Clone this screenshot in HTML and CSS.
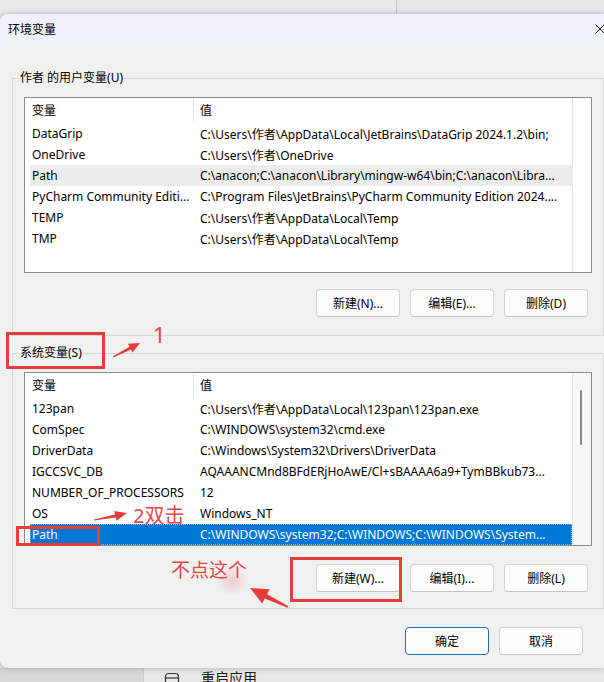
FILE: index.html
```html
<!DOCTYPE html>
<html lang="zh-CN">
<head>
<meta charset="utf-8">
<title>环境变量</title>
<link rel="stylesheet" href="styles.css">
</head>
<body>
<div class="behind-top"><div class="bt-left"></div><div class="bt-right"></div></div>

<div class="dialog">
  <div class="titlebar">
    <span class="title">环境变量</span>
    <svg class="close" width="10" height="10" viewBox="0 0 10 10"><path d="M0.5 0.5L9.5 9.5M9.5 0.5L0.5 9.5" stroke="#1a1a1a" stroke-width="1"/></svg>
  </div>
  <div class="dlg-body">
    <section class="group">
      <div class="group-title">作者 的用户变量(U)</div>
      <div class="list list-user">
        <div class="list-main">
          <div class="list-head"><div class="h-name">变量</div><div class="h-val">值</div></div>
          <div class="row"><div class="c-name">DataGrip</div><div class="c-val">C:\Users\作者\AppData\Local\JetBrains\DataGrip 2024.1.2\bin;</div></div>
          <div class="row"><div class="c-name">OneDrive</div><div class="c-val">C:\Users\作者\OneDrive</div></div>
          <div class="row row-hover"><div class="c-name">Path</div><div class="c-val">C:\anacon;C:\anacon\Library\mingw-w64\bin;C:\anacon\Libra...</div></div>
          <div class="row"><div class="c-name">PyCharm Community Editi...</div><div class="c-val">C:\Program Files\JetBrains\PyCharm Community Edition 2024....</div></div>
          <div class="row"><div class="c-name">TEMP</div><div class="c-val">C:\Users\作者\AppData\Local\Temp</div></div>
          <div class="row"><div class="c-name">TMP</div><div class="c-val">C:\Users\作者\AppData\Local\Temp</div></div>
        </div>
        <div class="list-side"></div>
      </div>
      <div class="btn-row btn-row-user">
        <button class="btn">新建(N)...</button>
        <button class="btn">编辑(E)...</button>
        <button class="btn">删除(D)</button>
      </div>
    </section>

    <section class="group group-sys">
      <div class="group-title">系统变量(S)</div>
      <div class="list list-sys">
        <div class="list-main">
          <div class="list-head"><div class="h-name">变量</div><div class="h-val">值</div></div>
          <div class="row"><div class="c-name">123pan</div><div class="c-val">C:\Users\作者\AppData\Local\123pan\123pan.exe</div></div>
          <div class="row"><div class="c-name">ComSpec</div><div class="c-val">C:\WINDOWS\system32\cmd.exe</div></div>
          <div class="row"><div class="c-name">DriverData</div><div class="c-val">C:\Windows\System32\Drivers\DriverData</div></div>
          <div class="row"><div class="c-name">IGCCSVC_DB</div><div class="c-val">AQAAANCMnd8BFdERjHoAwE/Cl+sBAAAA6a9+TymBBkub73...</div></div>
          <div class="row"><div class="c-name">NUMBER_OF_PROCESSORS</div><div class="c-val">12</div></div>
          <div class="row"><div class="c-name">OS</div><div class="c-val">Windows_NT</div></div>
          <div class="row row-selected"><div class="c-name">Path</div><div class="c-val">C:\WINDOWS\system32;C:\WINDOWS;C:\WINDOWS\System...</div></div>
        </div>
        <div class="list-side scroll-track"><div class="thumb"></div></div>
      </div>
      <div class="btn-row btn-row-sys">
        <button class="btn">新建(W)...</button>
        <button class="btn">编辑(I)...</button>
        <button class="btn">删除(L)</button>
      </div>
    </section>

    <div class="footer">
      <button class="btn btn-default">确定</button>
      <button class="btn">取消</button>
    </div>
  </div>
</div>

<div class="behind-bottom">
  <div class="bb-left"></div>
  <div class="bb-right">
    <svg class="bb-icon" width="16" height="14" viewBox="0 0 16 14"><rect x="1.5" y="1.5" width="13" height="14" rx="3" fill="none" stroke="#333" stroke-width="1.2"/><path d="M1.5 6H14.5" stroke="#333" stroke-width="1.2"/></svg>
    <span class="bb-text">重启应用</span>
  </div>
</div>

<div class="annotations">
  <svg class="anno-svg" width="604" height="682" viewBox="0 0 604 682">
    <g fill="none" stroke="#e63c3c" stroke-width="3">
      <rect x="7.5" y="333.5" width="96" height="34"/>
      <rect x="17.5" y="527.5" width="81" height="17"/>
      <rect x="291.5" y="558.5" width="109" height="42"/>
    </g>
    <g fill="#e63c3c">
      <polygon points="113.3,357.5 130.9,349.5 132.5,352.5 140,343 127.9,343.7 129.5,346.7 112.7,356.5"/>
      <polygon points="94.15,520.6 115.8,517.5 116.6,520.8 127,513 114.2,511.1 115.0,514.4 93.85,519.4"/>
      <polygon points="288.4,606.3 267.1,594.2 269.6,589.3 250,588 262.2,603.5 264.7,598.6 287.6,607.7"/>
    </g>
  </svg>
  <div class="blur"></div>
  <div class="anno-text anno-1">1</div>
  <div class="anno-text anno-2">2双击</div>
  <div class="anno-text anno-3">不点这个</div>
</div>
</body>
</html>
```

FILE: styles.css
```css
* { box-sizing: border-box; }
html, body { margin: 0; padding: 0; }
body {
  width: 604px;
  height: 682px;
  overflow: hidden;
  position: relative;
  background: #e4e4e4;
  font-family: "Noto Sans", "Noto Sans CJK SC", sans-serif;
  font-size: 12px;
  color: #000;
}

.behind-top { height: 14px; display: flex; }
.bt-left { width: 397px; background: #ebebeb; border-right: 1px solid #c9c9c9; }
.bt-right { flex: 1; background: #e7e7e7; }

.dialog {
  position: relative;
  z-index: 1;
  width: 604px;
  height: 654px;
  background: #f0f0f0;
  border-radius: 8px 0 0 8px;
  box-shadow: 0 0 6px rgba(0, 0, 0, 0.28);
  overflow: hidden;
  display: flex;
  flex-direction: column;
}

.titlebar {
  height: 29px;
  flex: none;
  background: #eef2f8;
  display: flex;
  align-items: center;
  padding-left: 8px;
}
.title { flex: 1; }
.close { flex: none; margin-right: -1px; }

.dlg-body { padding: 35px 0 0 12px; }

.group {
  width: 592px;
  border: 1px solid #d9d9d9;
  padding: 0 11px 18px 11px;
}
.group-sys { margin-top: 17px; padding-bottom: 16px; }
.group-title {
  width: fit-content;
  margin: -9px 0 0 -5px;
  padding: 0 1px;
  height: 16px;
  line-height: 16px;
  background: #f0f0f0;
}

.list {
  margin-top: 11px;
  height: 176px;
  background: #fff;
  border: 1px solid #8c8c8c;
  display: flex;
}
.list-sys { height: 174px; }
.list-main { width: 547px; display: flex; flex-direction: column; }
.list-side { flex: 1; border-left: 1px solid #e8e8e8; }
.scroll-track { background: #f7f7f7; border-left-color: #e3e3e3; }
.thumb {
  margin: 17px 0 0 7px;
  width: 2px;
  height: 55px;
  border-radius: 1px;
  background: #8a8a8a;
}

.list-head { height: 25px; display: flex; flex: none; }
.h-name { width: 169px; padding-left: 7px; line-height: 25px; border-right: 1px solid #e5e5e5; }
.h-val { flex: 1; padding-left: 6px; line-height: 25px; }

.row {
  height: 21px;
  flex: none;
  margin-left: 5px;
  display: flex;
  align-items: center;
  white-space: nowrap;
}
.c-name { width: 164px; padding-left: 2px; overflow: hidden; }
.c-val { flex: 1; padding-left: 6px; overflow: hidden; }
.row-hover { background: #ececec; }
.row-selected { background: #0078d7; color: #fff; outline: 1px dotted #7fb7e8; outline-offset: -1px; }

.btn {
  width: 84px;
  height: 28px;
  padding: 0;
  font: inherit;
  color: #000;
  background: #fdfdfd;
  border: 1px solid #d4d4d4;
  border-bottom-color: #c4c4c4;
  border-radius: 4px;
}
.btn-default { border: 1px solid #1f6fb5; }

.btn-row { display: flex; justify-content: flex-end; gap: 10px; padding-right: 4px; }
.btn-row-user { margin-top: 16px; }
.btn-row-sys { margin-top: 18px; }

.footer {
  width: 592px;
  margin-top: 18px;
  padding-right: 21px;
  display: flex;
  justify-content: flex-end;
  gap: 10px;
}

.behind-bottom { height: 14px; display: flex; overflow: hidden; }
.bb-left { width: 144px; background: #d8d8d8; border-right: 1px solid #cfcfcf; }
.bb-right { flex: 1; background: #e8e8e8; display: flex; align-items: flex-start; padding: 3px 0 0 20px; gap: 21px; }
.bb-icon { flex: none; margin-top: 1px; }
.bb-text { font-size: 14px; line-height: 14px; color: #1a1a1a; }

.annotations { position: absolute; left: 0; top: 0; width: 604px; height: 682px; z-index: 2; pointer-events: none; }
.anno-svg { position: absolute; left: 0; top: 0; }
.blur {
  position: absolute;
  left: 216px;
  top: 566px;
  width: 32px;
  height: 30px;
  background: radial-gradient(closest-side, rgba(235, 140, 140, 0.35), rgba(235, 140, 140, 0));
}
.anno-text { position: absolute; color: #e64545; line-height: 1; white-space: nowrap; }
.anno-1 { left: 153px; top: 323px; font-size: 22px; }
.anno-2 { left: 133px; top: 506px; font-size: 20px; }
.anno-3 { left: 171px; top: 561px; font-size: 19px; }
```
